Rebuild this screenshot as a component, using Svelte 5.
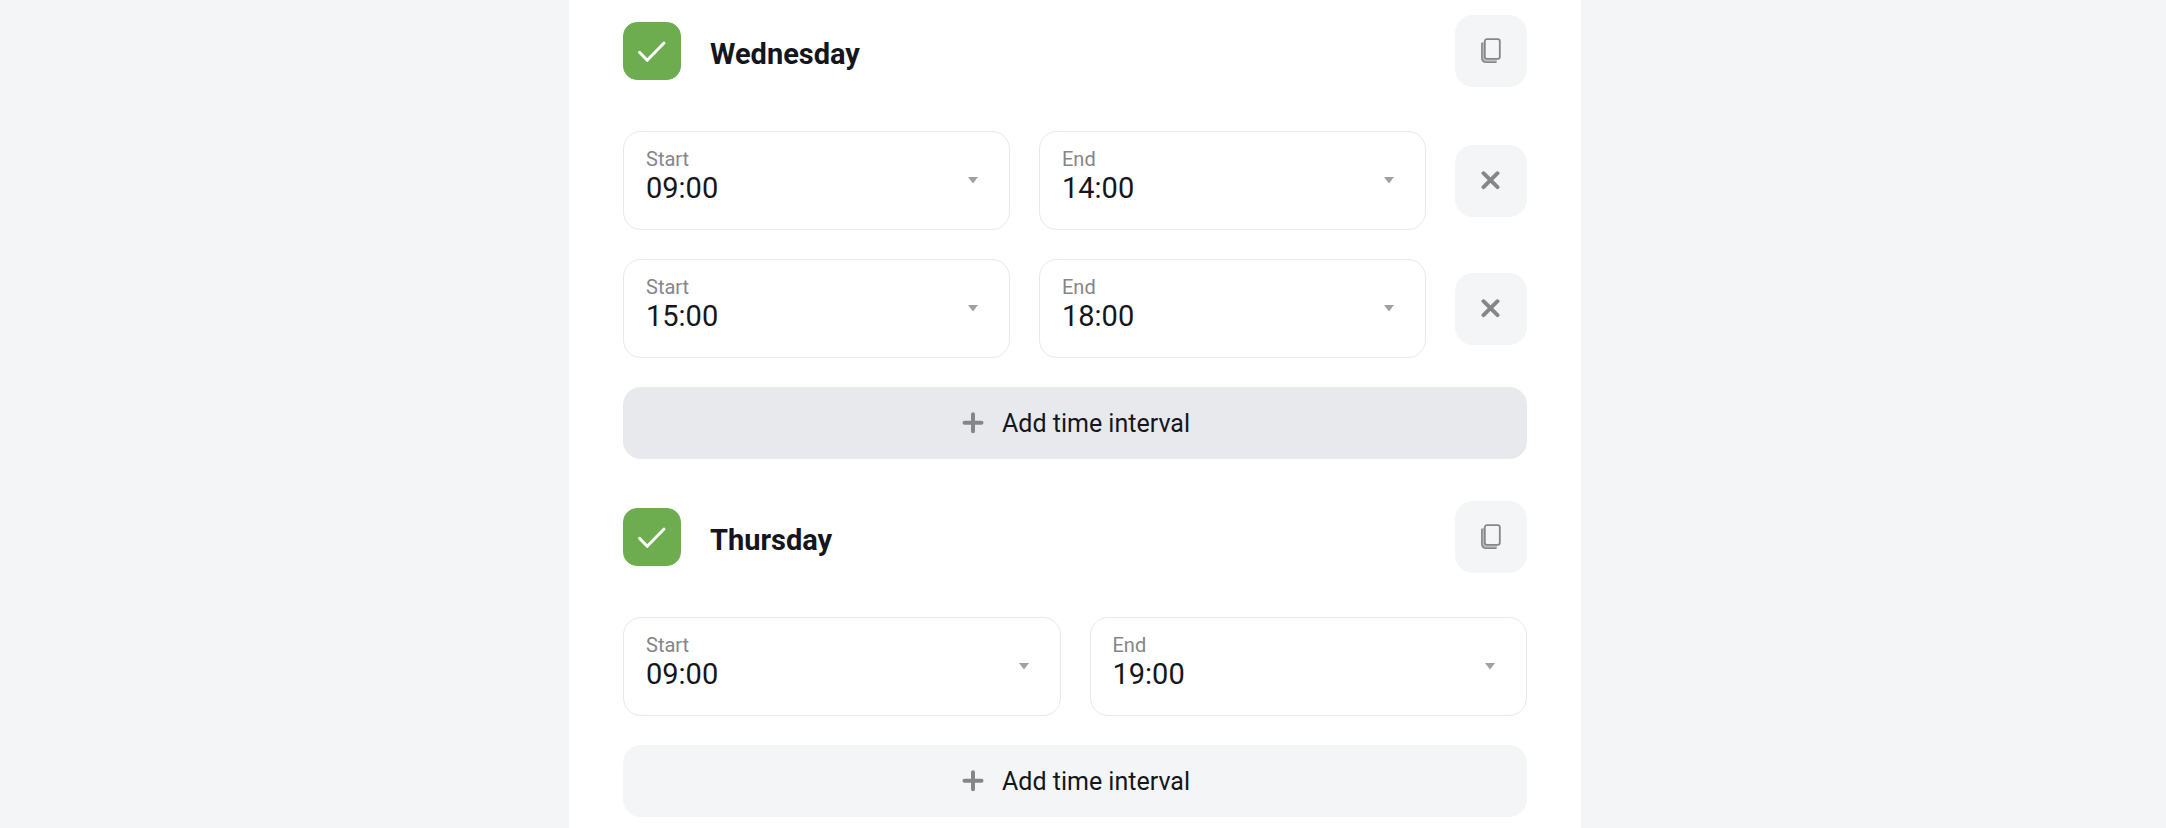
<script lang="ts">
  type Interval = { start: string; end: string };
  type Day = { name: string; enabled: boolean; intervals: Interval[] };

  let days = $state<Day[]>([
    {
      name: 'Wednesday',
      enabled: true,
      intervals: [
        { start: '09:00', end: '14:00' },
        { start: '15:00', end: '18:00' },
      ],
    },
    {
      name: 'Thursday',
      enabled: true,
      intervals: [{ start: '09:00', end: '19:00' }],
    },
  ]);

  // Wednesday's add button carries the highlighted tone
  let activeDay = $state('Wednesday');

  const hours = Array.from({ length: 24 }, (_, h) => `${String(h).padStart(2, '0')}:00`);

  function addInterval(day: Day) {
    activeDay = day.name;
    day.intervals.push({ start: '09:00', end: '18:00' });
  }

  function removeInterval(day: Day, index: number) {
    day.intervals.splice(index, 1);
  }

  // Apply one day's intervals to all the others
  function copyDay(source: Day) {
    for (const day of days) {
      if (day !== source) day.intervals = source.intervals.map((i) => ({ ...i }));
    }
  }
</script>

{#snippet timeField(id: string, label: string, interval: Interval, key: 'start' | 'end')}
  <div class="field">
    <div class="field-text">
      <label for={id}>{label}</label>
      <select {id} bind:value={interval[key]}>
        {#each hours as hour}
          <option value={hour}>{hour}</option>
        {/each}
      </select>
    </div>
    <svg class="caret" width="10" height="7" viewBox="0 0 10 7" aria-hidden="true">
      <path d="M0 0h10L5 6.500z" fill="#a0a1a3" />
    </svg>
  </div>
{/snippet}

<div class="page">
  <main class="card">
    {#each days as day}
      <section class="day">
        <header class="day-head">
          <span class="check">
            <input type="checkbox" id="day-{day.name}" bind:checked={day.enabled} />
            <svg width="58" height="58" viewBox="0 0 58 58" aria-hidden="true">
              <path d="M16.500 30.300l7.700 8L41 21" />
            </svg>
          </span>
          <label class="day-name" for="day-{day.name}">{day.name}</label>
          <button class="icon-btn" type="button" aria-label="Copy" onclick={() => copyDay(day)}>
            <svg width="20" height="26" viewBox="0 0 20 26" fill="none" stroke="#858688" aria-hidden="true">
              <path d="M2.300 4v16q0 2.800 2.800 2.800H16" stroke="#bdbec0" stroke-width="2.400" />
              <path d="M.900 4.700v15q0 4.500 4.500 4.500H15.500" stroke-width="1.600" />
              <rect x="3.800" y="1.200" width="15" height="19.600" rx="2" fill="#f3f5f7" stroke-width="1.800" />
            </svg>
          </button>
        </header>

        {#each day.intervals as interval, i}
          <div class="row">
            {@render timeField(`${day.name}-start-${i}`, 'Start', interval, 'start')}
            {@render timeField(`${day.name}-end-${i}`, 'End', interval, 'end')}
            {#if day.intervals.length > 1}
              <button class="icon-btn" type="button" aria-label="Remove" onclick={() => removeInterval(day, i)}>
                <svg width="20" height="20" viewBox="0 0 20 20" aria-hidden="true">
                  <path d="M2.500 2.200l14 14M16.500 2.200l-14 14" stroke="#858688" stroke-width="3.900" stroke-linecap="round" />
                </svg>
              </button>
            {/if}
          </div>
        {/each}

        <button class="add" class:add-active={activeDay === day.name} type="button" onclick={() => addInterval(day)}>
          <svg width="22" height="22" viewBox="0 0 22 22" aria-hidden="true">
            <path d="M11 2.200v17M2.500 10.700h17" stroke="#858688" stroke-width="4" stroke-linecap="round" />
          </svg>
          Add time interval
        </button>
      </section>
    {/each}
  </main>
</div>

<style>
  :global(body) {
    margin: 0;
    background: #f3f5f7;
  }

  .page {
    display: flex;
    justify-content: center;
    min-height: 100vh;
    padding-right: 16px;
    font-family: Roboto, "Liberation Sans", sans-serif;
    color: #15161c;
  }

  .card {
    box-sizing: border-box;
    width: 100%;
    max-width: 1012px;
    padding: 15px 54px 11px;
    background: #fff;
    display: flex;
    flex-direction: column;
    gap: 42px;
  }

  .day {
    display: flex;
    flex-direction: column;
    gap: 29px;
  }

  .day-head {
    display: flex;
    align-items: center;
    gap: 29px;
    margin-bottom: 15px;
  }

  .check {
    display: grid;
    flex-shrink: 0;
  }
  .check > * {
    grid-area: 1 / 1;
  }
  .check input {
    appearance: none;
    width: 58px;
    height: 58px;
    margin: 0;
    border: 1px solid #e8e9ec;
    border-radius: 14px;
    background: #fff;
    cursor: pointer;
  }
  .check input:checked {
    border-color: #6dad4f;
    background: #6dad4f;
  }
  .check svg {
    pointer-events: none;
    fill: none;
    stroke: #fff;
    stroke-width: 3;
    stroke-linecap: round;
    stroke-linejoin: round;
  }

  .day-name {
    flex: 1;
    padding-top: 5px;
    font-size: 29px;
    line-height: 36px;
    font-weight: 700;
  }

  .row {
    display: flex;
    align-items: center;
    gap: 29px;
  }

  .field {
    display: flex;
    align-items: center;
    flex: 1;
    min-width: 0;
    padding-right: 31px;
    border: 1px solid #e8e9eb;
    border-radius: 18px;
    background: #fff;
  }
  .field-text {
    display: flex;
    flex-direction: column;
    flex: 1;
    padding: 17px 0 23px 22px;
  }
  .field label {
    font-size: 20px;
    line-height: 21px;
    color: #858688;
  }
  .field select {
    appearance: none;
    height: 36px;
    margin: 0;
    padding: 0;
    border: 0;
    background: transparent;
    color: inherit;
    font: inherit;
    font-size: 29px;
    line-height: 36px;
    cursor: pointer;
  }
  .caret {
    flex-shrink: 0;
    pointer-events: none;
  }

  .icon-btn {
    display: flex;
    align-items: center;
    justify-content: center;
    flex-shrink: 0;
    width: 72px;
    height: 72px;
    padding: 0;
    border: 0;
    border-radius: 18px;
    background: #f3f5f7;
    cursor: pointer;
  }

  .add {
    display: flex;
    align-items: center;
    justify-content: center;
    gap: 18px;
    height: 72px;
    padding: 0 22px 0 24px;
    border: 0;
    border-radius: 18px;
    background: #f3f5f7;
    color: inherit;
    font: inherit;
    font-size: 25px;
    cursor: pointer;
  }
  .add:hover,
  .add-active {
    background: #e8e9ed;
  }
</style>
